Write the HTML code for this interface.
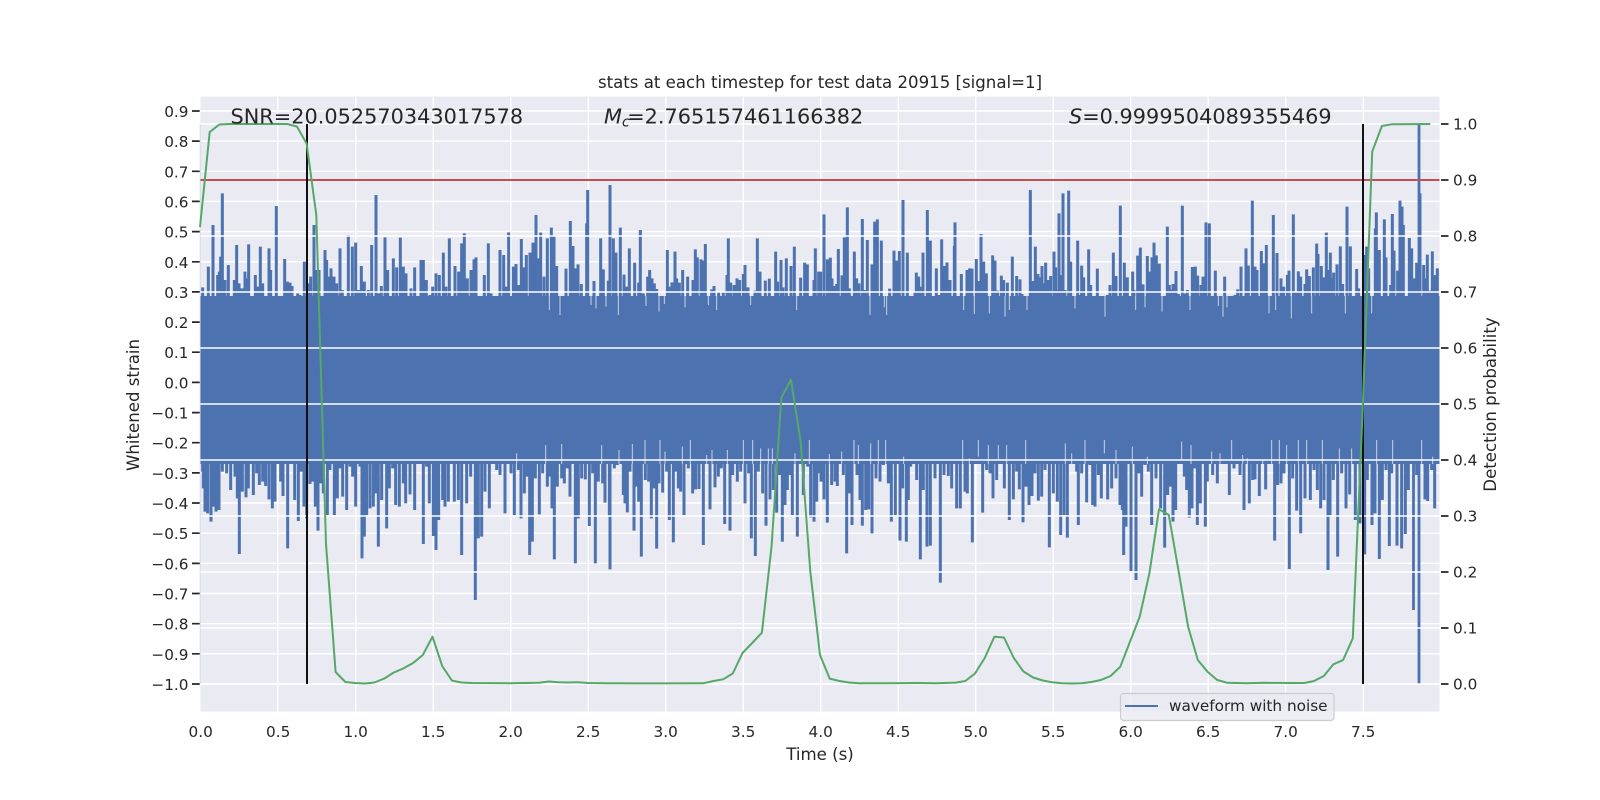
<!DOCTYPE html>
<html><head><meta charset="utf-8"><title>stats</title>
<style>
html,body{margin:0;padding:0;background:#fff}
svg{display:block}
text{font-family:"DejaVu Sans","Liberation Sans",sans-serif;fill:#262626}
.t{font-size:15.28px}
.l{font-size:16.6px}
.a{font-size:20.83px}
</style></head><body>
<svg width="1600" height="800" viewBox="0 0 1600 800" xmlns="http://www.w3.org/2000/svg">
<rect width="1600" height="800" fill="#fff"/>
<rect x="200.5" y="96.6" width="1239" height="615" fill="#eaeaf2"/>
<path fill="none" stroke="#fff" stroke-width="1.4" d="M277.7 96.6V711.6M355.7 96.6V711.6M433.2 96.6V711.6M510.7 96.6V711.6M588.2 96.6V711.6M665.7 96.6V711.6M743.2 96.6V711.6M820.7 96.6V711.6M898.2 96.6V711.6M975.7 96.6V711.6M1053.2 96.6V711.6M1130.7 96.6V711.6M1208.2 96.6V711.6M1285.7 96.6V711.6M1363.2 96.6V711.6
M200.5 111H1439.5M200.5 141.1H1439.5M200.5 171.3H1439.5M200.5 201.4H1439.5M200.5 231.6H1439.5M200.5 261.8H1439.5M200.5 291.9H1439.5M200.5 322.1H1439.5M200.5 352.2H1439.5M200.5 382.4H1439.5M200.5 412.6H1439.5M200.5 442.7H1439.5M200.5 472.9H1439.5M200.5 503H1439.5M200.5 533.2H1439.5M200.5 563.4H1439.5M200.5 593.5H1439.5M200.5 623.7H1439.5M200.5 653.8H1439.5M200.5 684H1439.5"/>
<path stroke="#dcdde6" stroke-width="1.2" d="M200.3 124V684"/>
<rect x="200.5" y="296" width="1239" height="168" fill="#4c72b0"/>
<g fill="none" stroke="#4c72b0" stroke-width="9">
<g transform="translate(120,60) scale(.33333)"><path d="M248 682V800M250 785V800M252 740V800M258 775V800M265 620V800M272 750V800M279 495V800M285 738V800M293 645V800M298 635V800M302 590V800M307 400V800M315 660V800M325 615V800M332 770V800M343 660V800M350 555V800M357 670V800M366 685V800M375 635V800M380 655V800M386 553V800M394 735V800M406 645V800M413 680V800M421 560V800M428 670V800M436 740V800M447 565V800M452 630V800M460 715V800M469 438V800M480 748V800M487 770V800M494 597V800M502 665V800M510 668V800M516 678V800M523 710V800M533 700V800M540 705V800M548 750V800M553 605V800M566 670V800M572 650V800M582 495V800M590 630V800M597 630V800M604 725V800M615 570V800M620 600V800M626 650V800M633 625V800M642 650V800M650 670V800M660 565V800M667 690V800M675 710V800M685 525V800M697 560V800M707 548V800M716 690V800M724 618V800M733 665V800M745 690V800M755 555V800M768 405V800M775 700V800M784 678V800M795 532V800M803 630V800M812 735V800M820 595V800M830 622V800M841 533V800M850 620V800M858 640V800M865 720V800M873 685V800M884 622V800M895 730V800M903 600V800M910 600V800M919 660V800M930 705V800M938 680V800M948 640V800M958 645V800M970 578V800M978 680V800M988 535V800M996 740V800M1005 618V800M1016 635V800M1025 550V800M1033 520V800M1042 655V800M1053 630V800M1062 598V800M1068 592V800M1078 755V800M1093 645V800M1105 550V800M1113 700V800M1125 740V800M1132 720V800M1140 570V800M1151 585V800M1157 680V800M1166 517V800"/></g>
<g transform="translate(510,170) scale(.33333)"><path d="M3 435V450M10 290V450M18 282V450M27 345V450M34 207V450M42 292V450M49 255V450M60 248V450M69 218V450M78 135V450M85 265V450M92 188V450M102 320V450M112 205V450M118 420V450M124 173V450M132 197V450M140 288V450M150 435V450M160 380V450M168 296V450M175 385V450M181 153V450M189 228V450M197 295V450M204 283V450M214 342V450M222 378V450M230 160V450M233 60V450M243 405V450M252 333V450M258 415V450M272 205V450M280 298V450M288 410V450M295 332V450M300 45V450M310 205V450M318 248V450M325 435V450M331 173V450M342 314V450M350 350V450M358 235V450M366 380V450M374 278V450M380 400V450M386 338V450M391 180V450M400 370V450M408 408V450M413 320V450M419 300V450M426 325V450M433 340V450M440 357V450M447 425V450M455 392V450M463 402V450M472 240V450M478 350V450M486 337V450M495 245V450M500 325V450M508 338V450M518 300V450M525 412V450M533 320V450M541 382V450M549 330V450M556 238V450M562 262V450M573 268V450M580 272V450M586 222V450M595 405V450M605 358V450M612 348V450M620 420V450M626 365V450M632 400V450M640 365V450M651 315V450M655 205V450M662 338V450M672 345V450M681 325V450M689 330V450M700 312V450M705 285V450M714 352V450M722 405V450M735 362V450M742 205V450M750 305V450M766 332V450M778 326V450M787 388V450M797 245V450M803 335V450M813 270V450M819 352V450M829 265V450M843 288V450M853 230V450M860 420V450M872 323V450M878 395V450M884 278V450M892 283V450M902 383V450M912 330V450M916 235V450M926 305V450"/></g>
<g transform="translate(820,170) scale(.33333)"><path d="M2 305V450M12 133V450M22 268V450M31 263V450M36 325V450M43 348V450M50 342V450M55 237V450M66 316V450M73 202V450M82 112V450M88 355V450M93 378V450M103 245V450M110 325V450M117 340V450M127 147V450M133 360V450M142 210V450M150 435V450M156 283V450M164 155V450M172 148V450M184 212V450M193 412V450M200 435V450M209 356V450M215 382V450M222 242V450M229 272V450M238 243V450M249 90V450M262 248V450M268 392V450M285 365V450M289 308V450M296 320V450M303 350V450M309 248V450M314 380V450M322 120V450M331 212V450M340 395V450M349 295V450M356 375V450M365 208V450M372 288V450M381 277V450M390 330V450M397 395V450M403 228V450M405 157V450M412 395V450M424 312V450M431 420V450M441 300V450M449 295V450M456 296V450M463 432V450M469 267V450M477 333V450M483 192V450M491 275V450M499 310V450M508 430V450M518 256V450M525 272V450M533 362V450M544 317V450M551 330V450M555 440V450M562 338V450M568 420V450M577 260V450M584 385V450M590 318V450M600 328V450M606 372V450M614 393V450M621 420V450M631 60V450M638 333V450M646 230V450M654 312V450M660 322V450M666 288V450M672 340V450M677 278V450M684 330V450M692 318V450M702 245V450M707 292V450M712 360V450M717 130V450M722 315V450M729 70V450M735 360V450M746 62V450M752 275V450M765 415V450M773 212V450M778 375V450M785 287V450M791 322V450M798 400V450M806 238V450M812 345V450M820 390V450M826 395V450M832 296V450M838 392V450M855 440V450M862 375V450M870 345V450M880 248V450M888 318V450M901 107V450M908 402V450M913 278V450M922 322V450"/></g>
<g transform="translate(1130,170) scale(.33333)"><path d="M8 305V450M12 360V450M17 420V450M23 257V450M31 233V450M39 343V450M45 412V450M52 258V450M58 305V450M66 262V450M72 218V450M79 256V450M88 281V450M96 425V450M101 400V450M112 170V450M118 345V450M123 358V450M129 342V450M138 303V450M145 372V450M157 107V450M165 370V450M172 360V450M180 420V450M187 291V450M196 290V450M203 317V450M213 345V450M219 320V450M228 157V450M238 160V450M246 378V450M256 302V450M265 408V450M270 425V450M279 440V450M284 320V450M291 412V450M297 395V450M308 400V450M315 375V450M323 358V450M333 290V450M343 400V450M348 235V450M355 287V450M367 92V450M375 290V450M381 300V450M394 243V450M400 280V450M409 225V450M417 430V450M424 395V450M430 135V450M437 420V450M441 249V450M447 385V450M453 325V450M461 350V450M472 315V450M477 302V450M484 445V450M490 133V450M497 365V450M505 304V450M512 320V450M517 400V450M525 342V450M530 298V450M538 318V450M545 430V450M550 292V450M560 221V450M564 252V450M574 288V450M580 322V450M589 188V450M594 300V450M601 248V450M606 325V450M611 308V450M621 283V450M631 229V450M638 342V450M646 430V450M651 110V450M661 229V450M669 402V450M680 297V450M686 355V450M691 388V450M705 255V450M710 230V450M716 295V450M725 430V450M736 175V450M739 127V450M748 240V450M763 148V450M768 262V450M773 395V450M782 345V450M787 132V450M792 242V450M803 302V450M810 92V450M816 110V450M820 165V450M830 378V450M838 204V450M845 235V450M853 325V450M860 278V450M870 70V450M881 285V450M887 325V450M892 254V450M900 362V450M907 244V450M914 315V450M922 295V450"/></g>
<g transform="translate(120,360) scale(.33333)"><path d="M248 240V335M250 240V385M255 240V455M263 240V460M273 240V485M280 240V440M288 240V455M297 240V450M307 240V335M320 240V340M332 240V390M345 240V350M352 240V415M358 240V582M367 240V395M378 240V412M385 240V385M392 240V312M400 240V405M410 240V340M418 240V375M428 240V365M437 240V378M447 240V418M457 240V445M465 240V425M474 240V305M482 240V365M489 240V408M503 240V565M513 240V305M524 240V420M535 240V483M544 240V335M552 240V440M560 240V475M570 240V372M578 240V365M586 240V440M594 240V512M602 240V370M610 240V400M622 240V465M630 240V330M643 240V465M652 240V415M660 240V325M668 240V410M680 240V450M690 240V320M698 240V350M707 240V440M720 240V320M726 240V595M733 240V530M740 240V465M750 240V445M760 240V440M767 240V400M775 240V560M785 240V420M800 240V505M808 240V385M818 240V325M827 240V435M838 240V440M850 240V370M857 240V430M870 240V403M884 240V450M910 240V552M920 240V320M928 240V430M940 240V528M948 240V570M956 240V480M968 240V420M975 240V440M985 240V425M993 240V295M1003 240V425M1015 240V420M1025 240V585M1040 240V430M1052 240V350M1066 240V720M1075 240V535M1085 240V530M1095 240V395M1108 240V445M1120 240V305M1130 240V330M1140 240V345M1155 240V460"/></g>
<g transform="translate(510,440) scale(.33333)"><path d="M3 0V100M13 0V225M25 0V90M33 0V235M43 0V160M50 0V110M59 0V345M67 0V305M76 0V115M88 0V223M98 0V100M112 0V140M120 0V110M126 0V205M133 0V358M142 0V140M155 0V115M163 0V130M172 0V85M180 0V170M196 0V370M205 0V235M215 0V115M226 0V118M238 0V258M248 0V100M256 0V370M265 0V125M278 0V130M285 0V188M298 0V225M300 0V388M313 0V85M322 0V75M340 0V165M345 0V190M352 0V217M360 0V95M372 0V272M380 0V140M386 0V185M394 0V350M406 0V120M416 0V125M424 0V235M432 0V145M440 0V326M447 0V130M458 0V158M470 0V95M478 0V240M490 0V307M497 0V95M505 0V145M512 0V155M522 0V225M535 0V85M548 0V160M557 0V148M567 0V147M580 0V315M589 0V40M600 0V208M615 0V142M625 0V110M634 0V85M644 0V252M660 0V272M668 0V105M682 0V125M692 0V95M705 0V190M716 0V100M724 0V295M736 0V348M745 0V95M758 0V160M768 0V257M780 0V178M790 0V150M800 0V218M808 0V105M817 0V305M825 0V195M832 0V150M840 0V105M847 0V225M862 0V290M868 0V70M880 0V165M893 0V80M902 0V232M912 0V245M920 0V185M927 0V100"/></g>
<g transform="translate(820,440) scale(.33333)"><path d="M3 0V125M12 0V178M22 0V248M35 0V135M45 0V125M52 0V138M62 0V60M70 0V105M80 0V340M88 0V160M96 0V255M111 0V105M120 0V180M127 0V257M137 0V210M146 0V208M156 0V280M168 0V115M180 0V125M190 0V75M205 0V130M214 0V245M226 0V225M240 0V302M248 0V145M259 0V305M265 0V180M272 0V80M290 0V120M301 0V358M310 0V150M321 0V320M331 0V317M345 0V115M361 0V428M372 0V105M385 0V108M395 0V145M410 0V205M421 0V205M435 0V155M442 0V160M457 0V307M470 0V25M488 0V218M500 0V90M510 0V100M519 0V175M530 0V120M553 0V145M568 0V240M580 0V178M590 0V95M598 0V148M609 0V247M618 0V140M627 0V195M636 0V168M645 0V100M655 0V182M665 0V170M675 0V90M688 0V322M700 0V160M712 0V185M722 0V285M732 0V225M742 0V293M750 0V45M770 0V95M775 0V255M785 0V100M800 0V187M810 0V75M818 0V195M825 0V200M835 0V105M844 0V175M863 0V178M875 0V145M888 0V115M900 0V195M907 0V210M911 0V345M918 0V260M925 0V55"/></g>
<g transform="translate(1130,440) scale(.33333)"><path d="M3 0V393M18 0V420M26 0V100M35 0V170M45 0V75M55 0V95M65 0V255M78 0V115M92 0V205M104 0V323M113 0V165M120 0V140M129 0V245M137 0V210M150 0V35M163 0V110M170 0V150M178 0V233M186 0V205M194 0V85M202 0V255M211 0V190M226 0V260M232 0V125M248 0V105M262 0V130M275 0V40M298 0V165M312 0V85M330 0V105M342 0V210M358 0V190M368 0V120M375 0V118M388 0V168M395 0V60M407 0V148M420 0V30M434 0V302M443 0V135M453 0V130M462 0V100M478 0V387M488 0V115M500 0V212M512 0V280M525 0V175M541 0V180M552 0V90M562 0V150M572 0V205M582 0V180M594 0V390M600 0V225M610 0V120M623 0V350M635 0V100M648 0V205M659 0V163M668 0V70M676 0V240M690 0V250M704 0V343M712 0V120M726 0V255M735 0V220M748 0V357M757 0V180M768 0V90M778 0V318M785 0V100M801 0V317M815 0V325M826 0V282M835 0V150M860 0V105M885 0V178M893 0V183M905 0V90M914 0V205M922 0V40"/></g>
<path stroke-width="2.8" d="M1413.5 440V610M1419 124V684"/>
</g>
<g fill="none" stroke="#eaeaf2" stroke-opacity=".8" stroke-width="3">
<g transform="translate(510,170) scale(.33333)"><path d="M118 370V420M150 378V435M243 378V405M258 378V415M288 378V410M325 378V435M408 378V408M447 378V425M463 378V402M525 378V412M595 378V405M620 378V420M722 378V405M860 378V420"/></g>
<g transform="translate(820,170) scale(.33333)"><path d="M150 378V435M193 378V412M200 378V435M431 378V420M463 378V432M508 378V430M555 378V440M568 378V420M621 378V420M765 378V415M855 378V440"/></g>
<g transform="translate(1130,170) scale(.33333)"><path d="M17 378V420M45 378V412M96 378V425M180 378V420M265 378V408M279 378V440M291 378V412M417 378V430M437 378V420M484 378V445M545 378V430M646 378V430M725 378V430"/></g>
<g transform="translate(510,440) scale(.33333)"><path d="M20 40V72M107 15V72M155 12V72M275 15V72M327 30V72M367 12V72M405 0V72M450 0V72M465 35V72M517 20V72M541 0V72M590 45V72M606 30V72M652 30V72M700 0V72M728 0V72M752 25V72M775 25V72M787 25V72M855 40V72M898 0V72"/></g>
<g transform="translate(820,440) scale(.33333)"><path d="M28 42V72M65 35V72M102 0V72M115 15V72M152 10V72M175 0V72M197 0V72M251 50V72M428 0V72M448 55V72M475 0V50M505 15V72M535 15V60M560 15V72M617 0V72M736 10V72M755 40V72M795 0V72M853 0V40M888 30V72"/></g>
<g transform="translate(1130,440) scale(.33333)"><path d="M7 20V72M52 50V72M155 5V60M183 15V72M245 35V72M270 40V72M305 0V60M338 45V72M352 55V72M398 58V72M425 0V72M448 0V72M470 15V72M505 0V72M530 0V72M577 0V72M628 25V72M665 25V72M740 0V72M788 0V72M875 0V72M908 50V72"/></g>
</g>
<path fill="none" stroke="#fff" stroke-width="1.4" d="M200.5 124H1439.5M200.5 180H1439.5M200.5 236H1439.5M200.5 292H1439.5M200.5 348H1439.5M200.5 404H1439.5M200.5 460H1439.5M200.5 516H1439.5M200.5 572H1439.5M200.5 628H1439.5M200.5 684H1439.5"/>
<path fill="none" stroke="#c44e52" stroke-width="2" d="M200.5 180H1439.5"/>
<path fill="none" stroke="#111" stroke-width="2" d="M307 124V684M1363 124V684"/>
<polyline fill="none" stroke="#55a868" stroke-width="2" stroke-linejoin="round" points="200,227 209.7,132 219.4,124.5 229,124 287.2,124 296.9,126.5 306.6,143.5 316.3,215 326,544 335.6,672 345.3,682 355,683 364.7,683.5 374.4,682.5 384.1,678.6 393.8,672.5 403.4,668.4 413.1,663 422.8,655 432.5,636.7 442.2,666 451.9,680.6 461.6,682.5 471.3,683 510,683.2 539,682.8 548.8,681.5 558.4,682.3 568.1,682.5 577.8,682.2 587.5,683 607,683.3 665,683.4 703,683.3 713.4,681 723.1,679.3 732.8,673.5 742.5,653 752.2,643 761.9,632.7 771.6,546 781.3,398 790.9,379.6 800.6,441 810.3,571.4 820,655 829.7,678.6 839.4,681 849,682.5 858.8,683.3 888,683.2 917,683 936,683.2 955.6,682.6 965.3,681 975,673.5 984.7,658 994.4,636.7 1004,637.5 1013.8,658 1023.4,671.4 1033.1,677.5 1042.8,680.5 1052.5,682.3 1062.2,683.2 1071.9,683.5 1081.6,683.3 1091.3,682 1100.9,680 1110.6,676 1120.3,666.7 1130,641.7 1139.7,616.7 1149.4,573.3 1159,509.3 1168.8,515 1178.4,570 1188.1,626.7 1197.8,660 1207.5,671.7 1217.2,680 1226.9,682.7 1246,683.2 1265,682.8 1295,683 1304.4,683 1314,681 1323.8,676 1333.4,664.3 1343.1,660 1352.8,638.3 1362.5,414 1372.2,151.7 1381.9,126 1391.6,124.3 1430.3,124"/>
<path fill="none" stroke="#262626" stroke-width="1.7" d="M192 111H199.7M192 141.1H199.7M192 171.3H199.7M192 201.4H199.7M192 231.6H199.7M192 261.8H199.7M192 291.9H199.7M192 322.1H199.7M192 352.2H199.7M192 382.4H199.7M192 412.6H199.7M192 442.7H199.7M192 472.9H199.7M192 503H199.7M192 533.2H199.7M192 563.4H199.7M192 593.5H199.7M192 623.7H199.7M192 653.8H199.7M192 684H199.7
M1441 124H1448.5M1441 180H1448.5M1441 236H1448.5M1441 292H1448.5M1441 348H1448.5M1441 404H1448.5M1441 460H1448.5M1441 516H1448.5M1441 572H1448.5M1441 628H1448.5M1441 684H1448.5"/>
<g class="t" text-anchor="end">
<text x="188.5" y="117">0.9</text><text x="188.5" y="147.1">0.8</text><text x="188.5" y="177.3">0.7</text><text x="188.5" y="207.4">0.6</text><text x="188.5" y="237.6">0.5</text><text x="188.5" y="267.8">0.4</text><text x="188.5" y="297.9">0.3</text><text x="188.5" y="328.1">0.2</text><text x="188.5" y="358.2">0.1</text><text x="188.5" y="388.4">0.0</text><text x="188.5" y="418.6">−0.1</text><text x="188.5" y="448.7">−0.2</text><text x="188.5" y="478.9">−0.3</text><text x="188.5" y="509">−0.4</text><text x="188.5" y="539.2">−0.5</text><text x="188.5" y="569.4">−0.6</text><text x="188.5" y="599.5">−0.7</text><text x="188.5" y="629.7">−0.8</text><text x="188.5" y="659.8">−0.9</text><text x="188.5" y="690">−1.0</text>
</g>
<g class="t">
<text x="1453" y="129.5">1.0</text><text x="1453" y="185.5">0.9</text><text x="1453" y="241.5">0.8</text><text x="1453" y="297.5">0.7</text><text x="1453" y="353.5">0.6</text><text x="1453" y="409.5">0.5</text><text x="1453" y="465.5">0.4</text><text x="1453" y="521.5">0.3</text><text x="1453" y="577.5">0.2</text><text x="1453" y="633.5">0.1</text><text x="1453" y="689.5">0.0</text>
</g>
<g class="t" text-anchor="middle">
<text x="200.7" y="737">0.0</text><text x="278.2" y="737">0.5</text><text x="355.7" y="737">1.0</text><text x="433.2" y="737">1.5</text><text x="510.7" y="737">2.0</text><text x="588.2" y="737">2.5</text><text x="665.7" y="737">3.0</text><text x="743.2" y="737">3.5</text><text x="820.7" y="737">4.0</text><text x="898.2" y="737">4.5</text><text x="975.7" y="737">5.0</text><text x="1053.2" y="737">5.5</text><text x="1130.7" y="737">6.0</text><text x="1208.2" y="737">6.5</text><text x="1285.7" y="737">7.0</text><text x="1363.2" y="737">7.5</text>
</g>
<text class="l" x="820" y="88" text-anchor="middle">stats at each timestep for test data 20915 [signal=1]</text>
<text class="l" x="820" y="760" text-anchor="middle">Time (s)</text>
<text class="l" transform="translate(139,405) rotate(-90)" text-anchor="middle">Whitened strain</text>
<text class="l" transform="translate(1496,404.5) rotate(-90)" text-anchor="middle">Detection probability</text>
<text class="a" x="230.5" y="123.5">SNR=20.052570343017578</text>
<text class="a" x="604" y="123.5"><tspan font-style="italic">M</tspan><tspan font-style="italic" font-size="14px" dy="3">c</tspan><tspan dy="-3" dx="-2.5">=2.765157461166382</tspan></text>
<text class="a" x="1069" y="123.5"><tspan font-style="italic">S</tspan>=0.9999504089355469</text>
<rect x="1120.5" y="693.5" width="213.5" height="27" rx="3" fill="#eaeaf2" fill-opacity=".8" stroke="#cccccc" stroke-width="1.2"/>
<path stroke="#4c72b0" stroke-width="2" d="M1125 706H1158"/>
<text class="t" x="1169" y="711">waveform with noise</text>
</svg>
</body></html>
